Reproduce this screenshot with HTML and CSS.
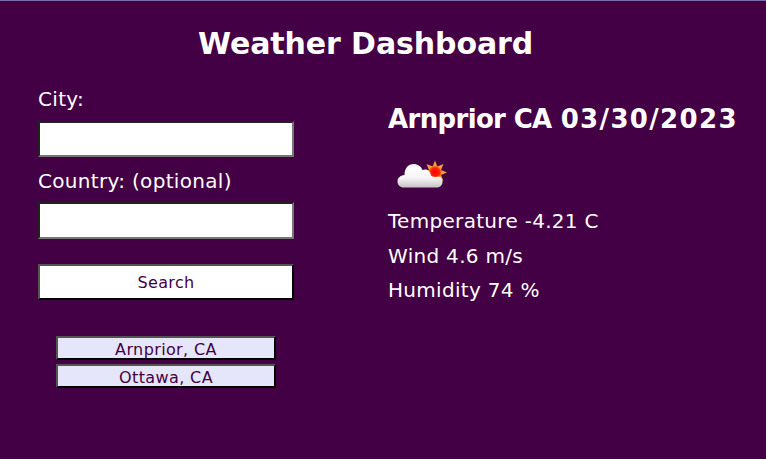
FILE: index.html
```html
<!DOCTYPE html>
<html lang="en">
<head>
<meta charset="utf-8">
<title>Weather Dashboard</title>
<link rel="stylesheet" href="styles.css">
</head>
<body>
<h1>Weather Dashboard</h1>
<main>
  <section class="search">
    <label for="city">City:</label>
    <input id="city" type="text">
    <label for="country">Country: (optional)</label>
    <input id="country" class="country" type="text">
    <button class="submit">Search</button>
    <div class="history">
      <button>Arnprior, CA</button>
      <button>Ottawa, CA</button>
    </div>
  </section>
  <section class="weather">
    <h2><span class="place">Arnprior CA</span> <span class="date">03/30/2023</span></h2>
    <svg class="icon" width="70" height="50" viewBox="0 0 70 50">
      <defs>
        <linearGradient id="cloud" x1="0" y1="0" x2="0" y2="1">
          <stop offset="0" stop-color="#ececec"/><stop offset="0.2" stop-color="#fff"/><stop offset="0.6" stop-color="#f4f4f4"/><stop offset="1" stop-color="#c4c4c4"/>
        </linearGradient>
        <radialGradient id="sun"><stop offset="0" stop-color="#f00"/><stop offset="0.7" stop-color="#fa2408"/><stop offset="1" stop-color="#f47a20"/></radialGradient>
      </defs>
      <path fill="#f3a03a" d="M47 9.500L49.300 15.500L55.500 13L53 19L59 21.500L53 24L55.500 30L49.300 27.500L47 33L44.700 27.500L38.500 30L41 24L35 21.500L41 19L38.500 13L44.700 15.500Z"/>
      <circle cx="47" cy="21.500" r="6.500" fill="url(#sun)"/>
      <path fill="url(#cloud)" d="M16 36.500C12 36.500 9.500 34 9.500 30.500C9.500 27 12 24.500 16.500 24C16.500 17.500 20 13 25.500 13C30 13 33 15.500 34.500 19C38 17.500 42 19 43 24.500C45.500 26.500 49 26 51 25.500C53.500 26.500 54.500 28.500 54.500 31C54.500 34.500 52 36.500 48 36.500Z"/>
    </svg>
    <p>Temperature -4.21 C</p>
    <p>Wind 4.6 m/s</p>
    <p>Humidity 74 %</p>
  </section>
</main>
</body>
</html>
```
FILE: styles.css
```css
* { box-sizing: border-box; }
body {
  margin: 0;
  height: 459px;
  overflow: hidden;
  border-top: 1px solid #806bb0;
  background: #440044;
  color: #fff;
  font-family: Verdana, "DejaVu Sans", sans-serif;
  font-size: 20px;
}
h1 {
  margin: 24px 0 0 198px;
  font-size: 30px;
  line-height: 38px;
  letter-spacing: -0.1px;
  white-space: nowrap;
}
main { display: flex; }
.search {
  display: flex;
  flex-direction: column;
  width: 256px;
  margin: 23px 0 0 38px;
}
label { line-height: 26px; letter-spacing: 0.32px; white-space: nowrap; }
input {
  height: 36px;
  margin: 9px 0 11px;
  border: 2px inset #767676;
  background: #fff;
}
.country { height: 37px; margin-top: 8px; }
button {
  padding: 2px 0 0;
  color: #404;
  font: 16px/20px Verdana, "DejaVu Sans", sans-serif;
  letter-spacing: 0.38px;
}
.submit {
  height: 36px;
  margin-top: 14px;
  border: 2px outset #000;
  background: #fff;
}
.history {
  display: flex;
  flex-direction: column;
  gap: 4px;
  margin: 36px 18px 0;
}
.history button { height: 24px; border: 2px outset #000; background: #e6e6fa; }
.weather { margin: 39px 0 0 94px; white-space: nowrap; }
h2 { margin: 0; font-size: 26px; line-height: 34px; }
.place { letter-spacing: -0.65px; }
.date { letter-spacing: 1.35px; }
.icon { display: block; margin: 15px 0 3px; }
p { margin: 0; line-height: 34.5px; letter-spacing: 0.3px; }
```
